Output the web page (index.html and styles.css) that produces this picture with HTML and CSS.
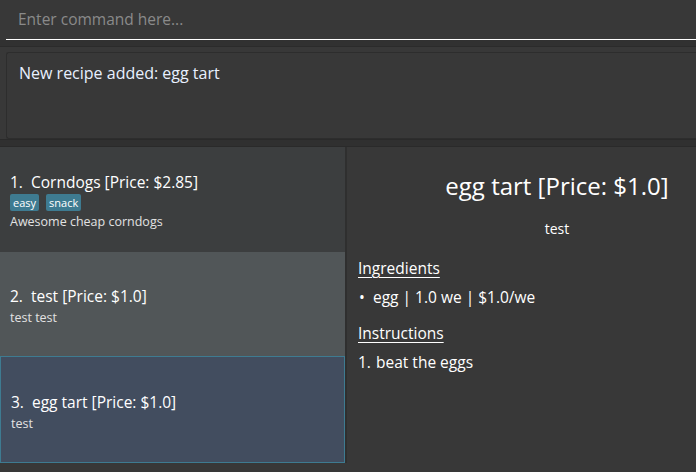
FILE: index.html
```html
<!DOCTYPE html>
<html>
<head>
<meta charset="utf-8">
<link rel="stylesheet" href="styles.css">
</head>
<body>
<div class="app">
  <div class="command-bar">
    <div class="command-field"><span class="placeholder">Enter command here...</span></div>
  </div>
  <div class="band band-top"></div>
  <div class="result-pane">
    <div class="result-box">New recipe added: egg tart</div>
  </div>
  <div class="band band-mid"></div>
  <div class="main">
    <div class="list">
      <div class="cell cell-even">
        <div class="cell-title"><span class="idx">1.</span>Corndogs [Price: $2.85]</div>
        <div class="tags"><span class="tag">easy</span><span class="tag">snack</span></div>
        <div class="cell-desc">Awesome cheap corndogs</div>
      </div>
      <div class="cell cell-odd">
        <div class="cell-title"><span class="idx">2.</span>test [Price: $1.0]</div>
        <div class="cell-desc cell-desc-gap">test test</div>
      </div>
      <div class="cell cell-selected">
        <div class="cell-title"><span class="idx">3.</span>egg tart [Price: $1.0]</div>
        <div class="cell-desc cell-desc-gap">test</div>
      </div>
    </div>
    <div class="divider"></div>
    <div class="detail">
      <div class="detail-head">
        <div class="detail-title">egg tart [Price: $1.0]</div>
        <div class="detail-sub">test</div>
      </div>
      <div class="section-title sec-ing">Ingredients</div>
      <div class="item"><span class="bullet">•</span>egg | 1.0 we | $1.0/we</div>
      <div class="section-title sec-ins">Instructions</div>
      <div class="item"><span class="num">1.</span>beat the eggs</div>
    </div>
  </div>
</div>
</body>
</html>
```

FILE: styles.css
```css
html, body {
  margin: 0;
  padding: 0;
}
body {
  width: 696px;
  height: 472px;
  overflow: hidden;
  background: #383838;
  font-family: "Open Sans", "Noto Sans", sans-serif;
  color: #ffffff;
}
.app {
  display: flex;
  flex-direction: column;
  width: 696px;
  height: 472px;
}
.command-bar {
  height: 40px;
  padding-left: 6px;
  box-sizing: border-box;
}
.command-field {
  height: 40px;
  box-sizing: border-box;
  border-bottom: 1px solid #ffffff;
  display: flex;
  align-items: center;
  padding-left: 12px;
  padding-bottom: 1px;
}
.placeholder {
  color: #8a8a8a;
  font-size: 15.5px;
}
.band {
  flex: none;
  box-sizing: border-box;
}
.band-top {
  height: 7px;
  background: #313131;
  border-bottom: 1px solid #2b2b2b;
}
.result-pane {
  height: 92px;
  padding: 5px 0 0 6px;
  box-sizing: border-box;
}
.result-box {
  height: 87px;
  box-sizing: border-box;
  border: 1px solid #2d2d2d;
  border-right: none;
  border-radius: 3px 0 0 3px;
  padding: 9px 12px;
  font-size: 16px;
  line-height: 22px;
  color: #e8f0ff;
}
.band-mid {
  height: 8px;
  background: #303030;
  border-top: 1px solid #2a2a2a;
  border-bottom: 1px solid #2a2a2a;
}
.main {
  height: 316px;
  display: flex;
}
.list {
  width: 345px;
  display: flex;
  flex-direction: column;
}
.cell {
  flex: 1;
  display: flex;
  flex-direction: column;
  justify-content: center;
  padding: 4px 10px 0 10px;
  box-sizing: border-box;
}
.cell-even {
  background: #3c3e3f;
}
.cell-odd {
  background: #515658;
}
.cell-selected {
  background: #424d5f;
  border: 1px solid #3e7b91;
}
.cell-title {
  font-size: 15.5px;
  line-height: 20px;
  color: #ffffff;
}
.idx {
  display: inline-block;
  width: 21px;
}
.tags {
  display: flex;
  gap: 7px;
  margin: 2px 0 1px;
}
.tag {
  background: #3e7b91;
  color: #ffffff;
  font-size: 11px;
  line-height: 17px;
  padding: 0 3px;
  border-radius: 2px;
}
.cell-desc {
  font-size: 12.5px;
  line-height: 17px;
  margin-top: 1px;
  color: #e2e2e2;
}
.cell-desc-gap {
  margin-top: 3px;
}
.divider {
  width: 2px;
  background: #2f2f2f;
}
.detail {
  flex: 1;
  padding-left: 11px;
  overflow: hidden;
}
.detail-head {
  padding-left: 60px;
  text-align: center;
}
.detail-title {
  font-size: 24px;
  line-height: 32px;
  margin-top: 23px;
}
.detail-sub {
  font-size: 14px;
  line-height: 20px;
  margin-top: 17px;
}
.section-title {
  font-size: 15.5px;
  line-height: 22px;
  text-decoration: underline;
  text-underline-offset: 3px;
}
.sec-ing {
  margin-top: 18px;
}
.sec-ins {
  margin-top: 14px;
}
.item {
  font-size: 15.5px;
  line-height: 22px;
  margin-top: 7px;
}
.bullet {
  display: inline-block;
  width: 14px;
  padding-left: 1px;
}
.num {
  display: inline-block;
  width: 18px;
}
```
